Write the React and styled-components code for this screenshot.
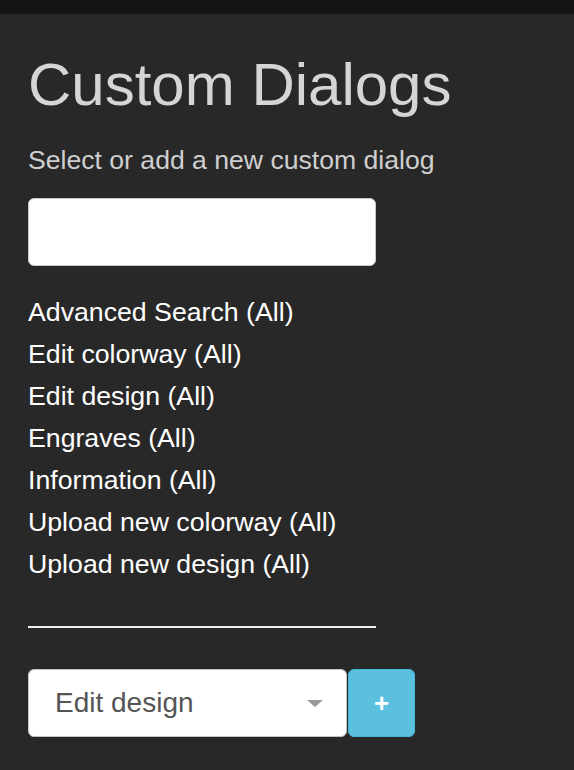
import React from "react";
import styled, { createGlobalStyle } from "styled-components";

const GlobalStyle = createGlobalStyle`
  html, body {
    margin: 0;
    padding: 0;
    background: #282828;
    font-family: "Liberation Sans", Arial, sans-serif;
  }
`;

const dialogs = [
  "Advanced Search (All)",
  "Edit colorway (All)",
  "Edit design (All)",
  "Engraves (All)",
  "Information (All)",
  "Upload new colorway (All)",
  "Upload new design (All)",
];

const App = () => {
  return (
    <>
      <GlobalStyle />
      <Page>
        <TopBar />
        <Content>
          <Title>Custom Dialogs</Title>
          <Subtitle>Select or add a new custom dialog</Subtitle>
          <SearchInput type="text" />
          <DialogList>
            {dialogs.map((d) => (
              <DialogItem key={d}>{d}</DialogItem>
            ))}
          </DialogList>
          <Divider />
          <AddRow>
            <SelectBox>
              <SelectText>Edit design</SelectText>
              <Caret />
            </SelectBox>
            <AddButton>+</AddButton>
          </AddRow>
        </Content>
      </Page>
    </>
  );
};

const Page = styled.div`
  min-height: 770px;
  background: #282828;
`;

const TopBar = styled.div`
  height: 14px;
  background: #141414;
`;

const Content = styled.div`
  padding: 0 28px;
  display: flex;
  flex-direction: column;
  align-items: flex-start;
`;

const Title = styled.h1`
  margin: 38px 0 0;
  font-size: 60px;
  line-height: 66px;
  font-weight: normal;
  color: #d5d5d5;
`;

const Subtitle = styled.p`
  margin: 27px 0 0;
  font-size: 26.6px;
  line-height: 30px;
  color: #cfcfcf;
`;

const SearchInput = styled.input`
  box-sizing: border-box;
  margin-top: 23px;
  width: 348px;
  height: 68px;
  border: 1px solid #c8c8c8;
  border-radius: 6px;
  background: #fff;
  outline: none;
  font-size: 26px;
  padding: 0 16px;
`;

const DialogList = styled.ul`
  list-style: none;
  margin: 25px 0 0;
  padding: 0;
`;

const DialogItem = styled.li`
  font-size: 26.7px;
  line-height: 42px;
  color: #ffffff;
`;

const Divider = styled.hr`
  margin: 41px 0 0;
  width: 348px;
  height: 2px;
  border: none;
  background: #f0f0f0;
`;

const AddRow = styled.div`
  display: flex;
  margin-top: 41px;
`;

const SelectBox = styled.div`
  box-sizing: border-box;
  width: 319px;
  height: 68px;
  display: flex;
  align-items: center;
  justify-content: space-between;
  padding: 0 23px 0 26px;
  background: #fff;
  border: 1px solid #c4c4c4;
  border-radius: 6px;
`;

const SelectText = styled.span`
  font-size: 28px;
  color: #555555;
`;

const Caret = styled.span`
  width: 0;
  height: 0;
  border-left: 8px solid transparent;
  border-right: 8px solid transparent;
  border-top: 7px solid #999999;
`;

const AddButton = styled.button`
  box-sizing: border-box;
  margin-left: 1px;
  width: 67px;
  height: 68px;
  background: #5bc0de;
  border: 1px solid #46b8da;
  border-radius: 6px;
  color: #fff;
  font-family: "Liberation Sans", Arial, sans-serif;
  font-size: 26px;
  font-weight: bold;
  line-height: 1;
  padding: 0;
`;

export default App;
